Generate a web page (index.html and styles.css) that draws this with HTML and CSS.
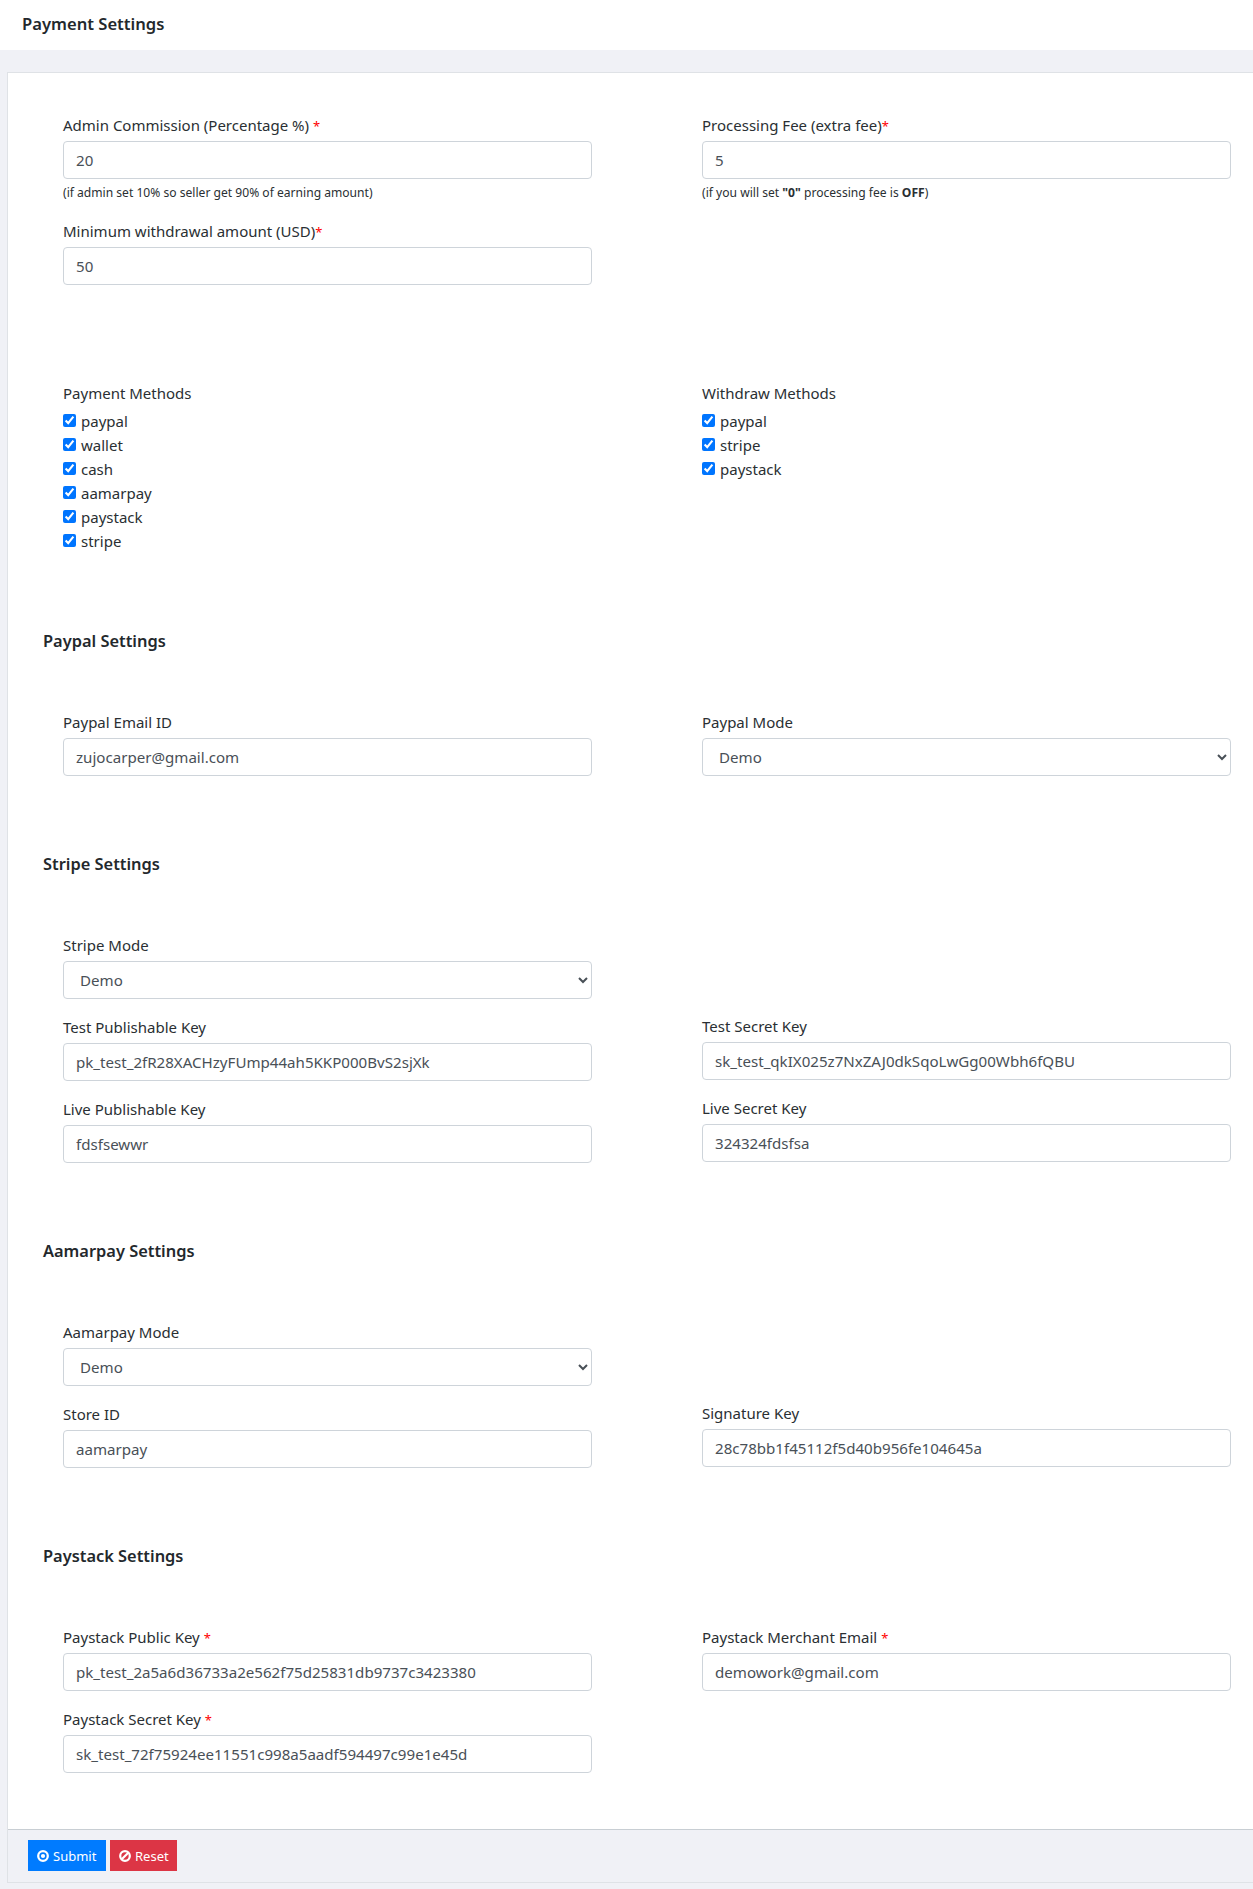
FILE: index.html
```html
<!DOCTYPE html>
<html lang="en">
<head>
<meta charset="utf-8">
<title>Payment Settings</title>
<link rel="stylesheet" href="styles.css">
</head>
<body>
<header class="page-header"><h1 class="page-title">Payment Settings</h1></header>
<main class="page-main">
<form class="card">
  <div class="card-body">
    <div class="grid">
      <div>
        <div class="group">
          <label class="label">Admin Commission (Percentage %) <span class="req">*</span></label>
          <input class="control" type="text" value="20">
          <small class="hint">(if admin set 10% so seller get 90% of earning amount)</small>
        </div>
        <div class="group">
          <label class="label">Minimum withdrawal amount (USD)<span class="req">*</span></label>
          <input class="control" type="text" value="50">
        </div>
      </div>
      <div>
        <div class="group">
          <label class="label">Processing Fee (extra fee)<span class="req">*</span></label>
          <input class="control" type="text" value="5">
          <small class="hint">(if you will set <b>"0"</b> processing fee is <b>OFF</b>)</small>
        </div>
      </div>
    </div>

    <div class="grid methods">
      <div>
        <div class="label">Payment Methods</div>
        <label class="check"><input type="checkbox" checked>paypal</label>
        <label class="check"><input type="checkbox" checked>wallet</label>
        <label class="check"><input type="checkbox" checked>cash</label>
        <label class="check"><input type="checkbox" checked>aamarpay</label>
        <label class="check"><input type="checkbox" checked>paystack</label>
        <label class="check"><input type="checkbox" checked>stripe</label>
      </div>
      <div>
        <div class="label">Withdraw Methods</div>
        <label class="check"><input type="checkbox" checked>paypal</label>
        <label class="check"><input type="checkbox" checked>stripe</label>
        <label class="check"><input type="checkbox" checked>paystack</label>
      </div>
    </div>

    <h2 class="section-title first">Paypal Settings</h2>
    <div class="grid">
      <div class="group">
        <label class="label">Paypal Email ID</label>
        <input class="control" type="text" value="zujocarper@gmail.com">
      </div>
      <div class="group">
        <label class="label">Paypal Mode</label>
        <select class="control select"><option>Demo</option></select>
      </div>
    </div>

    <h2 class="section-title">Stripe Settings</h2>
    <div class="grid">
      <div>
        <div class="group">
          <label class="label">Stripe Mode</label>
          <select class="control select"><option>Demo</option></select>
        </div>
        <div class="group">
          <label class="label">Test Publishable Key</label>
          <input class="control" type="text" value="pk_test_2fR28XACHzyFUmp44ah5KKP000BvS2sjXk">
        </div>
        <div class="group">
          <label class="label">Live Publishable Key</label>
          <input class="control" type="text" value="fdsfsewwr">
        </div>
      </div>
      <div class="shifted">
        <div class="group">
          <label class="label">Test Secret Key</label>
          <input class="control" type="text" value="sk_test_qkIX025z7NxZAJ0dkSqoLwGg00Wbh6fQBU">
        </div>
        <div class="group">
          <label class="label">Live Secret Key</label>
          <input class="control" type="text" value="324324fdsfsa">
        </div>
      </div>
    </div>

    <h2 class="section-title">Aamarpay Settings</h2>
    <div class="grid">
      <div>
        <div class="group">
          <label class="label">Aamarpay Mode</label>
          <select class="control select"><option>Demo</option></select>
        </div>
        <div class="group">
          <label class="label">Store ID</label>
          <input class="control" type="text" value="aamarpay">
        </div>
      </div>
      <div class="shifted">
        <div class="group">
          <label class="label">Signature Key</label>
          <input class="control" type="text" value="28c78bb1f45112f5d40b956fe104645a">
        </div>
      </div>
    </div>

    <h2 class="section-title">Paystack Settings</h2>
    <div class="grid">
      <div>
        <div class="group">
          <label class="label">Paystack Public Key <span class="req">*</span></label>
          <input class="control" type="text" value="pk_test_2a5a6d36733a2e562f75d25831db9737c3423380">
        </div>
        <div class="group">
          <label class="label">Paystack Secret Key <span class="req">*</span></label>
          <input class="control" type="text" value="sk_test_72f75924ee11551c998a5aadf594497c99e1e45d">
        </div>
      </div>
      <div>
        <div class="group">
          <label class="label">Paystack Merchant Email <span class="req">*</span></label>
          <input class="control" type="text" value="demowork@gmail.com">
        </div>
      </div>
    </div>
  </div>
  <div class="card-footer">
    <button class="btn btn-primary" type="button">
      <svg class="btn-icon" viewBox="0 0 16 16" aria-hidden="true"><circle cx="8" cy="8" r="6.4" fill="none" stroke="currentColor" stroke-width="3"/><circle cx="8" cy="8" r="2.8" fill="currentColor"/></svg>Submit
    </button>
    <button class="btn btn-danger" type="reset">
      <svg class="btn-icon" viewBox="0 0 16 16" aria-hidden="true"><circle cx="8" cy="8" r="6.4" fill="none" stroke="currentColor" stroke-width="3"/><path d="M3.6 12.4 12.4 3.6" fill="none" stroke="currentColor" stroke-width="3"/></svg>Reset
    </button>
  </div>
</form>
</main>
</body>
</html>
```

FILE: styles.css
```css
* { box-sizing: border-box; }
html, body { margin: 0; padding: 0; }
body {
  background: #f0f1f6;
  color: #2a2f33;
  font-family: "Noto Sans", "Open Sans", sans-serif;
  font-size: 15px;
  line-height: 24px;
  height: 1889px;
  overflow: hidden;
}
.page-header {
  height: 50px;
  background: #fff;
  display: flex;
  align-items: center;
  padding: 0 0 2px 22px;
}
.page-title {
  margin: 0;
  font-size: 16.6px;
  font-weight: 600;
  color: #23282c;
}
.page-main { padding: 22px 0 0 7px; }
.card {
  background: #fff;
  border: 1px solid #dfe2e6;
  border-right: 0;
  display: block;
}
.card-body { padding: 40px 22px 40px 55px; }
.grid {
  display: grid;
  grid-template-columns: 529px 529px;
  column-gap: 110px;
}
.group { margin-bottom: 16px; }
.label { display: block; height: 24px; margin-bottom: 4px; }
.req { color: #f00; font-size: 13px; }
.control {
  display: block;
  width: 100%;
  height: 38px;
  padding: 6px 12px;
  border: 1px solid #ced4da;
  border-radius: 4px;
  background: #fff;
  color: #495057;
  font: inherit;
  font-size: 15.1px;
}
.hint {
  display: block;
  margin-top: 4px;
  font-size: 12.1px;
  line-height: 20px;
}
.hint b { font-weight: 700; }
.methods { margin-top: 80px; }
.check { display: flex; align-items: center; height: 24px; }
.check input { width: 13px; height: 13px; margin: 0 5px 2px 0; }
.section-title {
  margin: 60px 0 57px -20px;
  font-size: 16.4px;
  font-weight: 600;
  line-height: 24px;
  color: #23282c;
}
.section-title.first { margin-top: 76px; }
.shifted { padding-top: 81px; }
.card-footer {
  height: 53px;
  padding: 10px 20px;
  background: #f0f1f6;
  border-top: 1px solid #c8ced3;
  display: flex;
  gap: 4px;
}
.btn {
  height: 31px;
  border: 0;
  border-radius: 0;
  padding: 0 0 0 9px;
  color: #fff;
  font: inherit;
  font-size: 13px;
  display: inline-flex;
  align-items: center;
  justify-content: flex-start;
  gap: 4px;
}
.btn-primary { background: #007bff; width: 78px; }
.btn-danger { background: #dc3545; width: 67px; }
.btn-icon { width: 12px; height: 12px; flex: none; }
```
